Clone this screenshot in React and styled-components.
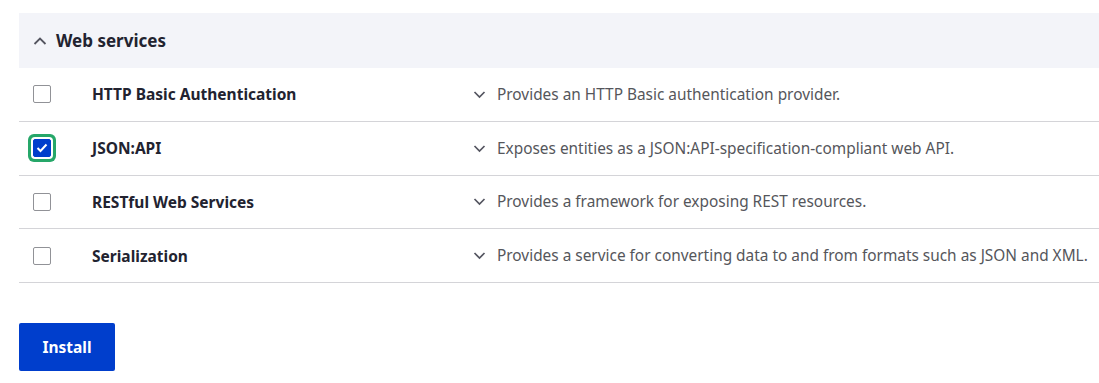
import React, { useState } from "react";
import styled, { createGlobalStyle } from "styled-components";

const Global = createGlobalStyle`
  html, body { margin: 0; padding: 0; background: #fff; }
  body { font-family: "Noto Sans", "Open Sans", sans-serif; color: #232429; }
  * { box-sizing: border-box; }
`;

const Page = styled.div`
  padding: 13px 0 0 19px;
`;

const Header = styled.div`
  display: flex;
  align-items: center;
  gap: 9px;
  height: 55px;
  padding-left: 14px;
  background: #f3f4f9;
  font-size: 17px;
  font-weight: 700;
  color: #222330;
`;

const Row = styled.div`
  display: grid;
  grid-template-columns: 73px 381px 1fr;
  align-items: center;
  height: 53.75px;
  border-bottom: 1px solid #d4d4d8;
`;

const BoxCell = styled.div`
  display: flex;
  align-items: center;
  padding-left: 14px;
`;

const Box = styled.span`
  width: 18px;
  height: 18px;
  border-radius: 2px;
  border: 1px solid ${(p) => (p.$checked ? "#003ecc" : "#919297")};
  background: ${(p) => (p.$checked ? "#003ecc" : "#fff")};
  box-shadow: ${(p) => (p.$checked ? "0 0 0 2px #fff, 0 0 0 5px #26a769" : "none")};
  display: flex;
  align-items: center;
  justify-content: center;
  cursor: pointer;
`;

const Name = styled.div`
  font-size: 15.5px;
  font-weight: 700;
  color: #222330;
`;

const Desc = styled.div`
  display: flex;
  align-items: center;
  gap: 11px;
  font-size: 15.4px;
  color: #55565b;
`;

const Button = styled.button`
  margin-top: 40px;
  width: 96px;
  height: 48px;
  border: 0;
  border-radius: 2px;
  background: #003ecc;
  color: #fff;
  font-family: inherit;
  font-size: 15.5px;
  font-weight: 700;
`;

const ChevronUp = () => (
  <svg width="14" height="14" viewBox="0 0 14 14" fill="none">
    <path d="M1.5 10 L7 4.5 L12.5 10" stroke="#545560" strokeWidth="1.8" />
  </svg>
);

const ChevronDown = () => (
  <svg width="13" height="13" viewBox="0 0 13 13" fill="none">
    <path d="M1.5 4 L6.5 9 L11.5 4" stroke="#545560" strokeWidth="1.7" />
  </svg>
);

const Check = () => (
  <svg width="12" height="10" viewBox="0 0 12 10" fill="none">
    <path d="M1.5 5 L4.5 8 L10.5 1.5" stroke="#fff" strokeWidth="2" />
  </svg>
);

const modules = [
  { name: "HTTP Basic Authentication", desc: "Provides an HTTP Basic authentication provider.", checked: false },
  { name: "JSON:API", desc: "Exposes entities as a JSON:API-specification-compliant web API.", checked: true },
  { name: "RESTful Web Services", desc: "Provides a framework for exposing REST resources.", checked: false },
  { name: "Serialization", desc: "Provides a service for converting data to and from formats such as JSON and XML.", checked: false },
];

export default function App() {
  const [state, setState] = useState(modules.map((m) => m.checked));
  return (
    <Page>
      <Global />
      <Header>
        <ChevronUp />
        Web services
      </Header>
      {modules.map((m, i) => (
        <Row key={m.name}>
          <BoxCell>
            <Box
              $checked={state[i]}
              onClick={() => setState((s) => s.map((v, j) => (j === i ? !v : v)))}
            >
              {state[i] && <Check />}
            </Box>
          </BoxCell>
          <Name>{m.name}</Name>
          <Desc>
            <ChevronDown />
            {m.desc}
          </Desc>
        </Row>
      ))}
      <Button>Install</Button>
    </Page>
  );
}
